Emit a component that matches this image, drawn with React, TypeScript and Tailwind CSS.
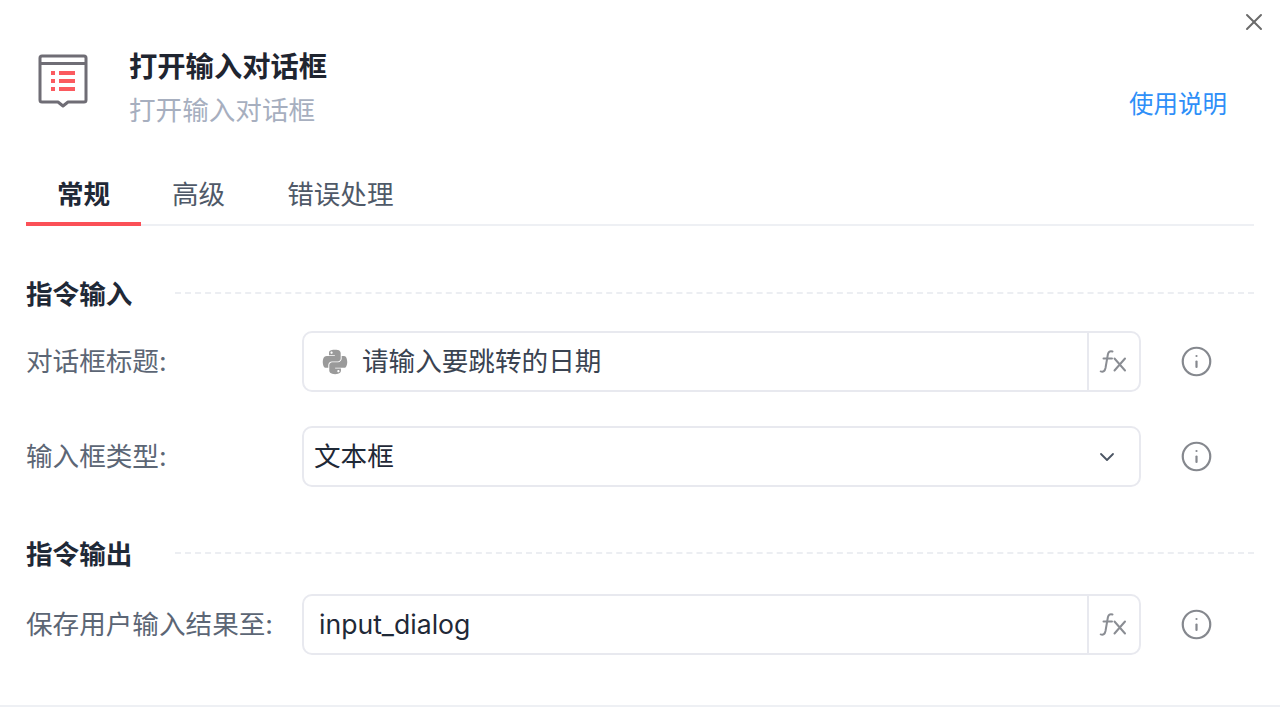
import { ChevronDown, Info, X } from "lucide-react";
import { FaPython } from "react-icons/fa";

const FONT = "font-['Inter','Noto_Sans_CJK_SC',sans-serif]";

function FxIcon() {
  return (
    <svg width="30" height="26" viewBox="0 0 30 26" fill="none" stroke="#8a8d93" strokeWidth="2" strokeLinecap="round">
      <path d="M13.5 2.5c-2.5-.8-4 .2-4.600 2.800L6.500 19c-.6 3-2.200 4.200-4.800 3.400" />
      <path d="M4.500 9.500h8.500" />
      <path d="M15.500 9.500l10.500 12M26 9.500l-10.500 12" />
    </svg>
  );
}

function DialogIcon() {
  return (
    <svg width="50" height="54" viewBox="0 0 50 54" fill="none">
      <path
        d="M4 2h42a2 2 0 0 1 2 2v42a2 2 0 0 1-2 2H30l-5 4-5-4H4a2 2 0 0 1-2-2V4a2 2 0 0 1 2-2z"
        stroke="#6f6d75"
        strokeWidth="3"
        strokeLinejoin="round"
      />
      <path d="M2 9.500h46" stroke="#6f6d75" strokeWidth="3" />
      <path d="M13 17h4v4h-4zM21 17h16v4H21zM13 25h4v4h-4zM21 25h16v4H21zM13 33h4v4h-4zM21 33h16v4H21z" fill="#fb5a5f" />
    </svg>
  );
}

function SectionTitle({ title }: { title: string }) {
  return (
    <div className="flex items-center h-[30px]">
      <span className="w-[149px] shrink-0 text-[26.6px] leading-[30px] font-semibold text-[#1f2937]">{title}</span>
      <div className="flex-1 border-t-2 border-dashed border-[#eceef2] -mt-[2px]" />
    </div>
  );
}

function FieldRow({ label, children }: { label: string; children: React.ReactNode }) {
  return (
    <div className="flex items-center h-[61px]">
      <span className="w-[276px] shrink-0 text-[26.6px] text-[#5c6675] whitespace-nowrap">{label}</span>
      <div className="w-[839px] h-[61px] flex items-center rounded-[10px] border-2 border-[#e8e9ef] bg-white">
        {children}
      </div>
      <Info className="ml-[39px] text-[#85888e]" size={33} strokeWidth={1.6} />
    </div>
  );
}

function FxButton() {
  return (
    <div className="w-[52px] h-full shrink-0 flex items-center justify-center border-l-2 border-[#e8e9ef]">
      <FxIcon />
    </div>
  );
}

export default function App() {
  return (
    <div className={`relative w-[1280px] h-[710px] bg-white overflow-hidden flex flex-col ${FONT}`}>
      <button className="absolute top-[8px] right-[12px] text-[#6b6b6b]">
        <X size={28} strokeWidth={1.7} />
      </button>

      {/* Header */}
      <div className="flex items-start h-[168px] pl-[38px] pr-[53px] pt-[48px]">
        <div className="mt-[6px]">
          <DialogIcon />
        </div>
        <div className="ml-[41px] flex-1">
          <div className="text-[28.3px] leading-[38px] font-semibold text-[#1f2530]">打开输入对话框</div>
          <div className="text-[26.6px] leading-[38px] mt-[5px] text-[#a7afbf]">打开输入对话框</div>
        </div>
        <a className="text-[24.500px] leading-[38px] mt-[37px] text-[#2e8ff8]">使用说明</a>
      </div>

      {/* Tabs */}
      <div className="mx-[26px] h-[58px] flex border-b-2 border-[#eef0f4] text-[26.6px] leading-[36px]">
        <div className="w-[115px] h-[58px] text-center pt-[8px] font-semibold text-[#1f2937] border-b-4 border-[#fb5057]">常规</div>
        <div className="ml-[31px] pt-[8px] text-[#4f5968]">高级</div>
        <div className="ml-[62px] pt-[8px] text-[#4f5968]">错误处理</div>
      </div>

      {/* Form */}
      <div className="mx-[26px] mt-[53px] flex flex-col">
        <SectionTitle title="指令输入" />
        <div className="mt-[22px]">
          <FieldRow label="对话框标题:">
            <FaPython className="ml-[17px] text-[#9a9a9a]" size={28} />
            <span className="ml-[13px] flex-1 text-[26.6px] text-[#3a4351]">请输入要跳转的日期</span>
            <FxButton />
          </FieldRow>
        </div>
        <div className="mt-[34px]">
          <FieldRow label="输入框类型:">
            <span className="ml-[10px] flex-1 text-[26.6px] text-[#1f2937]">文本框</span>
            <ChevronDown className="mr-[20px] text-[#4b5563]" size={24} strokeWidth={1.8} />
          </FieldRow>
        </div>
        <div className="mt-[52px]">
          <SectionTitle title="指令输出" />
        </div>
        <div className="mt-[25px]">
          <FieldRow label="保存用户输入结果至:">
            <span className="ml-[15px] flex-1 text-[26.6px] text-[#1f2937]">input_dialog</span>
            <FxButton />
          </FieldRow>
        </div>
      </div>

      {/* Footer line */}
      <div className="mt-auto mb-[3px] border-t-2 border-[#eef0f4]" />
    </div>
  );
}
